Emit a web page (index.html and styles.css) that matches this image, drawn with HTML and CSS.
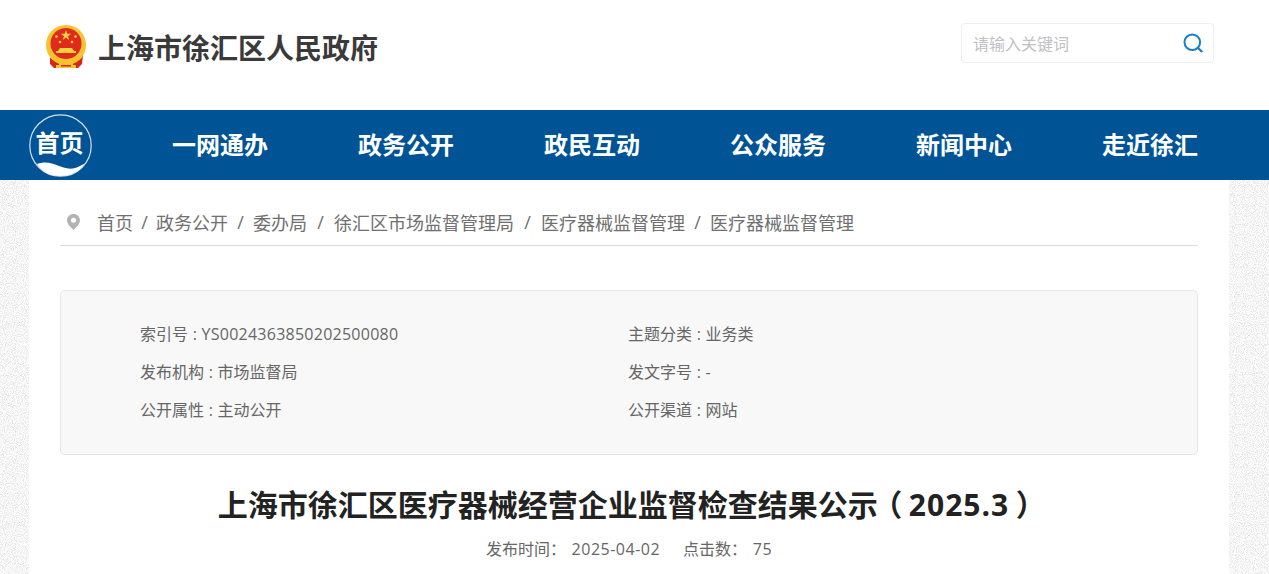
FILE: index.html
```html
<!DOCTYPE html>
<html lang="zh-CN">
  <head>
    <meta charset="UTF-8" />
    <meta name="viewport" content="width=device-width, initial-scale=1.0" />
    <title>上海市徐汇区医疗器械经营企业监督检查结果公示（2025.3）</title>
    <link rel="stylesheet" href="styles.css">
  </head>

  <body>
    <header class="top">
      <div class="brand">
        <svg class="emblem" width="42" height="44" viewBox="0 0 42 44" aria-hidden="true">
          <path d="M5 30 L38 30 L37 39 L33 43 L9 43 L5 39 Z" fill="#d8261c" />
          <circle cx="21" cy="20" r="20" fill="#f6c22d" />
          <circle cx="21" cy="18.500" r="15.500" fill="#e12a1e" />
          <path d="M21 5 L22.300 8.800 L26.200 8.800 L23 11.200 L24.200 14.900 L21 12.600 L17.800 14.900 L19 11.200 L15.800 8.800 L19.700 8.800 Z" fill="#f8d23a" />
          <circle cx="11.500" cy="11.500" r="1.300" fill="#f8d23a" />
          <circle cx="30.500" cy="11.500" r="1.300" fill="#f8d23a" />
          <circle cx="15" cy="17" r="1.300" fill="#f8d23a" />
          <circle cx="27" cy="17" r="1.300" fill="#f8d23a" />
          <path d="M15 23 L27 23 L29 26 L31 26 L31 28 L11 28 L11 26 L13 26 Z" fill="#f8d23a" />
          <path d="M5 30 Q21 38 37 30 L37 33 Q21 41 5 33 Z" fill="#f6c22d" />
          <path d="M14 38 L28 38 L28 40 L31 40 L31 43 L11 43 L11 40 L14 40 Z" fill="#f6c22d" />
          <rect x="16" y="40" width="10" height="1.500" fill="#d8261c" />
        </svg>
        <h2 class="site-name">上海市徐汇区人民政府</h2>
      </div>
      <form class="search">
        <span class="search-hint">请输入关键词</span>
        <svg width="20" height="20" viewBox="0 0 20 20" aria-hidden="true">
          <circle cx="9.300" cy="9.300" r="7.800" fill="none" stroke="#1a7fc4" stroke-width="2" />
          <path d="M14.800 14.800 L18.600 18.400" stroke="#1a7fc4" stroke-width="2.200" stroke-linecap="round" />
        </svg>
      </form>
    </header>

    <nav class="mainnav">
      <a class="home" href="#">
        <svg class="home-wave" width="63" height="63" viewBox="0 0 63 63" aria-hidden="true">
          <circle cx="31.500" cy="31.500" r="30.700" fill="none" stroke="#d5e1ec" stroke-width="1.200" />
          <path d="M8 50 C13 48 18 48 23 49.500 C30 51.500 37 55.500 44 54.500 C48 54 52 51 55.500 50 C50 58 41 62 31.500 62 C21.500 62 13 58 8 50 Z" fill="#fff" />
        </svg>
        <span class="home-label">首页</span>
      </a>
      <a href="#">一网通办</a>
      <a href="#">政务公开</a>
      <a href="#">政民互动</a>
      <a href="#">公众服务</a>
      <a href="#">新闻中心</a>
      <a href="#">走近徐汇</a>
    </nav>

    <main class="page">
      <div class="crumbs">
        <svg class="pin" width="13" height="16" viewBox="0 0 13 16" aria-hidden="true">
          <path fill-rule="evenodd" d="M6.500 0 C10 0 13 2.700 13 6.200 C13 10 9 13.500 6.500 16 C4 13.500 0 10 0 6.200 C0 2.700 3 0 6.500 0 Z M6.500 3.800 A2.500 2.500 0 1 0 6.500 8.800 A2.500 2.500 0 1 0 6.500 3.800 Z" fill="#b3b3b3" />
        </svg>
        <a href="#">首页</a><i>/</i>
        <a href="#">政务公开</a><i class="mid">/</i>
        <a href="#">委办局</a><i class="wide">/</i>
        <a href="#">徐汇区市场监督管理局</a><i class="wide">/</i>
        <a href="#">医疗器械监督管理</a><i class="mid">/</i>
        <a href="#">医疗器械监督管理</a>
      </div>

      <section class="info">
        <p>索引号 : <span class="code">YS0024363850202500080</span></p>
        <p>主题分类 : 业务类</p>
        <p>发布机构 : 市场监督局</p>
        <p>发文字号 : -</p>
        <p>公开属性 : 主动公开</p>
        <p>公开渠道 : 网站</p>
      </section>

      <h1 class="title">上海市徐汇区医疗器械经营企业监督检查结果公示<span class="paren">（</span><span class="year">2025.3</span><span class="paren">）</span></h1>
      <div class="meta">
        <span>发布时间： <span class="num">2025-04-02</span></span>
        <span>点击数： <span class="num">75</span></span>
      </div>
    </main>
  </body>
</html>
```

FILE: styles.css
```css
* {
  box-sizing: border-box;
}

html,
body {
  height: 100%;
}

body {
  margin: 0;
  overflow: hidden;
  font-family: "Open Sans", "Noto Sans CJK SC", sans-serif;
  color: #666;
  background-color: #fff;
  background-image: url("data:image/svg+xml,%3Csvg xmlns='http://www.w3.org/2000/svg' width='200' height='200'%3E%3Cfilter id='n'%3E%3CfeTurbulence type='fractalNoise' baseFrequency='1.1' numOctaves='1' stitchTiles='stitch'/%3E%3CfeColorMatrix values='0 0 0 0 0.75 0 0 0 0 0.75 0 0 0 0 0.75 3 0 0 0 -1.2'/%3E%3C/filter%3E%3Crect width='200' height='200' filter='url(%23n)'/%3E%3C/svg%3E");
}

a {
  color: inherit;
  text-decoration: none;
}

.top {
  height: 110px;
  padding: 23px 55px 0 45px;
  display: flex;
  justify-content: space-between;
  align-items: flex-start;
  background: #fff;
}

.brand {
  display: flex;
  align-items: center;
  gap: 11px;
  height: 48px;
}

.emblem {
  flex: none;
}

.site-name {
  margin: 0;
  padding-top: 2px;
  font-size: 28px;
  font-weight: 700;
  line-height: 48px;
  color: #3a3a3a;
}

.search {
  width: 253px;
  height: 40px;
  padding: 0 10px 0 11px;
  display: flex;
  justify-content: space-between;
  align-items: center;
  border: 1px solid #eeeeee;
  border-radius: 4px;
}

.search-hint {
  font-size: 16px;
  color: #c0c0c4;
}

.mainnav {
  height: 70px;
  padding-left: 29px;
  display: flex;
  align-items: center;
  background: #005496;
}

.mainnav a {
  margin-right: 90px;
  font-size: 24px;
  font-weight: 700;
  line-height: 68px;
  white-space: nowrap;
  color: #fff;
}

.mainnav .home {
  position: relative;
  flex: none;
  width: 63px;
  height: 63px;
  margin-right: 80px;
  text-align: center;
  line-height: 58px;
}

.home-wave {
  position: absolute;
  left: 0;
  top: 0;
}

.home-label {
  position: relative;
  margin-left: -2px;
}

.page {
  width: 1200px;
  height: 394px;
  margin-left: 29px;
  padding: 0 31px;
  background: #fff;
}

.crumbs {
  height: 66px;
  padding: 18px 0 0 7px;
  display: flex;
  align-items: center;
  border-bottom: 1px solid #dddddd;
  font-size: 18px;
  white-space: nowrap;
  color: #707070;
}

.pin {
  margin-right: 17px;
}

.crumbs i {
  width: 23px;
  text-align: center;
  font-style: normal;
}

.crumbs i.mid {
  width: 25px;
}

.crumbs i.wide {
  width: 27px;
}

.info {
  height: 165px;
  margin-top: 44px;
  padding: 24px 0 0 79px;
  display: grid;
  grid-template-columns: 488px 1fr;
  grid-auto-rows: 38px;
  background: #f8f8f8;
  border: 1px solid #e6e6e6;
  border-radius: 5px;
}

.info p {
  margin: 0;
  font-size: 16px;
  line-height: 38px;
  word-spacing: 0.5px;
  color: #666;
}

.code {
  letter-spacing: 0.25px;
}

.title {
  margin: 28px 0 0;
  font-size: 30px;
  font-weight: 700;
  line-height: 44px;
  text-align: center;
  color: #222;
}

.paren {
  display: inline-block;
  width: 31px;
  text-align: center;
  font-feature-settings: "palt";
}

.year {
  letter-spacing: 1px;
}

.meta {
  margin-top: 10px;
  display: flex;
  justify-content: center;
  gap: 23px;
  font-size: 16px;
  line-height: 24px;
  word-spacing: 1.5px;
  color: #666;
}

.num {
  letter-spacing: 0.5px;
}
```
